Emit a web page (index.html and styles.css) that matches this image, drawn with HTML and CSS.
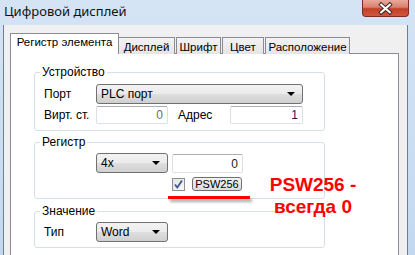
FILE: index.html
```html
<!DOCTYPE html>
<html lang="ru">
<head>
  <meta charset="UTF-8">
  <title>Цифровой дисплей</title>
  <link rel="stylesheet" href="styles.css">
</head>
<body>

  <div class="window">

    <!-- заголовок окна -->
    <div class="titlebar">
      <span class="title">Цифровой дисплей</span>
      <div class="close">
        <svg width="47" height="17" viewBox="0 0 47 17">
          <path d="M19 4.5 L28 12.5 M28 4.5 L19 12.5" stroke="#3b2a2a" stroke-width="4.2" stroke-linecap="square"/>
          <path d="M19 4.5 L28 12.5 M28 4.5 L19 12.5" stroke="#fff" stroke-width="2.2" stroke-linecap="square"/>
        </svg>
      </div>
    </div>

    <div class="client">
      <div class="tabs">
        <div class="tab active t-reg">Регистр элемента</div>
        <div class="tab t-disp">Дисплей</div>
        <div class="tab t-font">Шрифт</div>
        <div class="tab t-color">Цвет</div>
        <div class="tab t-place">Расположение</div>
      </div>

      <div class="page">
        <fieldset class="group g-device">
          <legend>Устройство</legend>
          <div class="row">
            <span class="lbl">Порт</span>
            <div class="combo w-port">PLC порт<span class="arrow"></span></div>
          </div>
          <div class="row row-edit">
            <span class="lbl">Вирт. ст.</span>
            <div class="edit w-small muted">0</div>
            <span class="lbl lbl-addr">Адрес</span>
            <div class="edit w-addr addr">1</div>
          </div>
        </fieldset>

        <fieldset class="group g-reg">
          <legend>Регистр</legend>
          <div class="row">
            <span class="lbl"></span>
            <div class="combo w-small">4x<span class="arrow"></span></div>
            <div class="edit w-reg">0</div>
          </div>
          <div class="row row-check">
            <div class="check">
              <svg width="11" height="11" viewBox="0 0 11 11">
                <path d="M2 5.5 L4.3 8.5 L9 1.5" fill="none" stroke="#3c5696" stroke-width="1.8"/>
              </svg>
            </div>
            <div class="btn">PSW256</div>
          </div>
        </fieldset>

        <fieldset class="group g-value">
          <legend>Значение</legend>
          <div class="row">
            <span class="lbl">Тип</span>
            <div class="combo w-small">Word<span class="arrow"></span></div>
          </div>
        </fieldset>
      </div>
    </div>

    <!-- пометка поверх окна -->
    <div class="underline"></div>
    <div class="note">PSW256 -<br>всегда 0</div>
  </div>

</body>
</html>
```

FILE: styles.css
```css
html, body {
  margin: 0;
  padding: 0;
  width: 415px;
  height: 255px;
  overflow: hidden;
  font-family: 'Liberation Sans', Arial, sans-serif;
  font-size: 12px;
  color: #000;
}

.window {
  position: relative;
  height: 255px;
  background: linear-gradient(to bottom, #d5e4f5, #c3d8ef);
}

/* заголовок */
.titlebar {
  height: 25px;
  display: flex;
  justify-content: space-between;
  padding: 0 6px 0 4px;
  box-sizing: border-box;
}

.title {
  padding-top: 3px;
  line-height: 17px;
  font-family: 'Noto Sans', sans-serif;
  font-size: 13px;
  color: #111;
}

.close {
  width: 47px;
  height: 17px;
  box-sizing: border-box;
  border: 1px solid #7a2f26;
  border-top: none;
  border-radius: 0 0 4px 4px;
  background: linear-gradient(to bottom, #e9a99c 0%, #d8806d 45%, #c23f28 55%, #d2563c 100%);
  display: flex;
  align-items: center;
  justify-content: center;
}

.close svg {
  display: block;
}

/* клиентская область */
.client {
  height: 230px;
  margin: 0 7px 0 3px;
  border-left: 1px solid #6f7f92;
  border-right: 1px solid #6f7f92;
  background: #f0f0f0;
  padding: 8px 8px 0 6px;
  display: flex;
  flex-direction: column;
}

.tabs {
  display: flex;
  align-items: flex-end;
  height: 21px;
  margin-bottom: -1px;
  position: relative;
  z-index: 1;
}

.tab {
  height: 16px;
  line-height: 18px;
  box-sizing: content-box;
  border: 1px solid #898c95;
  border-bottom: none;
  background: linear-gradient(to bottom, #f3f3f3, #e5e5e5);
  white-space: nowrap;
  font-size: 11.5px;
  text-align: center;
}

.tab.active {
  height: 20px;
  line-height: 17px;
  background: #fff;
  margin-right: -1px;
  position: relative;
  z-index: 2;
}

.t-reg   { width: 107px; }
.t-disp  { width: 55px; }
.t-font  { width: 43px; margin-left: 1px; }
.t-color { width: 40px; margin-left: 1px; }
.t-place { width: 83px; margin-left: 1px; }

.page {
  flex: 1;
  background: #fff;
  border: 1px solid #898c95;
  padding: 0 0 0 23px;
}

/* группы */
.group {
  width: 291px;
  box-sizing: border-box;
  margin: 0;
  border: 1px solid #d5dfe5;
  border-radius: 3px;
  padding: 5px 21px 6px 9px;
}

.group legend {
  padding: 0 2px;
  margin-left: -4px;
  line-height: 14px;
}

.g-device { margin-top: 11px; }
.g-reg    { margin-top: 4px; padding-top: 4px; padding-bottom: 7px; }
.g-value  { margin-top: 5px; padding-top: 4px; padding-bottom: 5px; }

.row {
  display: flex;
  align-items: center;
  height: 20px;
}

.row-edit {
  height: 18px;
  margin-top: 2px;
}

.row-check {
  height: 14px;
  margin-top: 4px;
  padding-left: 128px;
}

.lbl {
  width: 52px;
  flex: none;
}

.lbl-addr {
  margin-left: 10px;
}

/* элементы */
.combo {
  position: relative;
  height: 20px;
  line-height: 18px;
  box-sizing: border-box;
  padding-left: 4px;
  border: 1px solid #707070;
  border-radius: 3px;
  background: linear-gradient(to bottom, #f3f3f3 0%, #ebebeb 48%, #dedede 52%, #d0d0d0 100%);
}

.arrow {
  position: absolute;
  right: 7px;
  top: 7px;
  width: 0;
  height: 0;
  border-left: 4px solid transparent;
  border-right: 4px solid transparent;
  border-top: 4px solid #000;
}

.w-port  { width: 207px; }
.w-small { width: 72px; }

.edit {
  height: 18px;
  line-height: 16px;
  box-sizing: border-box;
  border: 1px solid #dbdfe6;
  border-top-color: #abadb3;
  border-radius: 2px;
  background: #fff;
  text-align: right;
  padding-right: 4px;
}

.w-addr { width: 73px; }

.w-reg {
  width: 71px;
  height: 19px;
  margin-left: 4px;
  line-height: 18px;
  color: #222;
}

.muted { color: #6d6d6d; }
.addr  { color: #3e0a5a; }

.check {
  width: 13px;
  height: 13px;
  box-sizing: border-box;
  border: 1px solid #8e8f8f;
  background: linear-gradient(to bottom right, #e4e4e4, #f8f8f8);
  display: flex;
  align-items: center;
  justify-content: center;
}

.check svg {
  display: block;
}

.btn {
  width: 50px;
  height: 14px;
  margin-left: 7px;
  box-sizing: border-box;
  border: 1px solid #707070;
  border-radius: 3px;
  background: linear-gradient(to bottom, #f4f4f4, #dcdcdc);
  font-size: 11px;
  line-height: 12px;
  text-align: center;
}

/* красная пометка */
.underline {
  position: absolute;
  left: 168px;
  top: 196px;
  width: 82px;
  height: 3px;
  background: #ff0000;
  box-shadow: 2px 3px 3px rgba(0, 0, 0, 0.35);
}

.note {
  position: absolute;
  left: 263px;
  top: 174px;
  width: 100px;
  text-align: center;
  font-weight: bold;
  font-size: 19px;
  line-height: 22px;
  color: #ff0000;
}
```
